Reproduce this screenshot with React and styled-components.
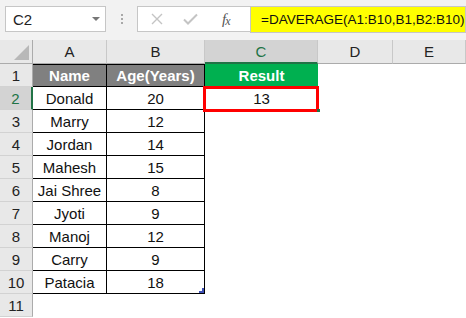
import React from "react";
import styled, { createGlobalStyle, css } from "styled-components";

const GlobalStyle = createGlobalStyle`
  html, body { margin: 0; padding: 0; background: #fff; overflow: hidden; }
  body { font-family: "Liberation Sans", Arial, sans-serif; }
`;

const COLS = ["A", "B", "C", "D", "E"];

const ROWS = [
  ["Donald", 20],
  ["Marry", 12],
  ["Jordan", 14],
  ["Mahesh", 15],
  ["Jai Shree", 8],
  ["Jyoti", 9],
  ["Manoj", 12],
  ["Carry", 9],
  ["Patacia", 18],
];

const Window = styled.div`
  width: 466px;
  height: 318px;
  display: flex;
  flex-direction: column;
  background: #fff;
  overflow: hidden;
`;

const FormulaBar = styled.div`
  height: 40px;
  box-sizing: border-box;
  padding: 6px 0 0 5px;
  background: #f2f2f2;
  display: flex;
  align-items: flex-start;
`;

const NameBox = styled.div`
  width: 101px;
  height: 26px;
  box-sizing: border-box;
  border: 1px solid #c6c6c6;
  background: #fff;
  display: flex;
  align-items: center;
  justify-content: space-between;
  padding: 0 5px 0 7px;
  font-size: 15px;
  color: #222;
`;

const Caret = styled.span`
  width: 0;
  height: 0;
  border-left: 4px solid transparent;
  border-right: 4px solid transparent;
  border-top: 4px solid #777;
`;

const Grip = styled.div`
  width: 31px;
  height: 26px;
  display: flex;
  flex-direction: column;
  align-items: center;
  justify-content: center;
  gap: 2px;

  span {
    width: 2px;
    height: 2px;
    background: #a8a8a8;
  }
`;

const ButtonBox = styled.div`
  width: 113px;
  height: 26px;
  box-sizing: border-box;
  border: 1px solid #c6c6c6;
  border-right: none;
  background: #fff;
  display: flex;
  align-items: center;
  padding-left: 13px;
  gap: 20px;
`;

const Fx = styled.span`
  font-family: "Liberation Serif", "Times New Roman", serif;
  font-style: italic;
  font-size: 15px;
  color: #555;
  margin-left: 4px;
  letter-spacing: -1px;

  sub {
    font-size: 12px;
    vertical-align: baseline;
    position: relative;
    top: 1px;
  }
`;

const FormulaInput = styled.div`
  flex: 1;
  height: 27px;
  box-sizing: border-box;
  border: 1px solid #c6c6c6;
  background: #ffff00;
  display: flex;
  align-items: center;
  padding-left: 10px;
  font-size: 13.5px;
  color: #111;
  white-space: nowrap;
`;

const Sheet = styled.div`
  display: grid;
  grid-template-columns: 33px 74px 98px 113px 75px 73px;
  grid-template-rows: 24px repeat(11, 23px);
  font-size: 15px;
`;

const Corner = styled.div`
  background: #e8e8e8;
  box-sizing: border-box;
  border-right: 1px solid #ababab;
  border-bottom: 1px solid #ababab;
  display: flex;
  align-items: flex-end;
  justify-content: flex-end;
  padding: 0 3px 3px 0;

  &::before {
    content: "";
    width: 15px;
    height: 15px;
    background: #b8b8b8;
    clip-path: polygon(100% 0, 100% 100%, 0 100%);
  }
`;

const ColHead = styled.div`
  box-sizing: border-box;
  background: #e8e8e8;
  border-right: 1px solid #c8c8c8;
  border-bottom: 1px solid #ababab;
  display: flex;
  align-items: center;
  justify-content: center;
  color: #222;
  ${(p) =>
    p.$active &&
    css`
      background: #d3d3d3;
      color: #217346;
      border-bottom: 2px solid #217346;
    `}
`;

const RowHead = styled.div`
  box-sizing: border-box;
  background: #e8e8e8;
  border-right: 1px solid #ababab;
  border-bottom: 1px solid #d2d2d2;
  display: flex;
  align-items: center;
  justify-content: center;
  color: #222;
  ${(p) =>
    p.$active &&
    css`
      background: #d3d3d3;
      color: #217346;
      border-right: 2px solid #217346;
    `}
`;

const Cell = styled.div`
  box-sizing: border-box;
  position: relative;
  display: flex;
  align-items: center;
  justify-content: center;
  color: #111;
  white-space: nowrap;
  ${(p) =>
    p.$table &&
    css`
      border-right: 1px solid #000;
      border-bottom: 1px solid #000;
    `}
  ${(p) =>
    p.$head &&
    css`
      background: #808080;
      color: #fff;
      font-weight: bold;
      border-top: 1px solid #000;
    `}
  ${(p) =>
    p.$result &&
    css`
      background: #00b050;
      color: #fff;
      font-weight: bold;
    `}
  ${(p) =>
    p.$selected &&
    css`
      &::after {
        content: "";
        position: absolute;
        top: -1px;
        left: -2px;
        right: -1px;
        bottom: -2px;
        border: 3px solid #ff0000;
        z-index: 2;
      }
      &::before {
        content: "";
        position: absolute;
        right: -2px;
        bottom: -2px;
        width: 3px;
        height: 3px;
        background: #217346;
        z-index: 3;
      }
    `}
  ${(p) =>
    p.$handle &&
    css`
      &::after {
        content: "";
        position: absolute;
        right: 0;
        bottom: 0;
        width: 5px;
        height: 5px;
        background: #3f51b5;
        clip-path: polygon(100% 0, 100% 100%, 0 100%, 0 60%, 60% 60%, 60% 0);
      }
    `}
`;

const Cross = () => (
  <svg width="12" height="12" viewBox="0 0 12 12">
    <path d="M1 1L11 11M11 1L1 11" stroke="#c4c4c4" strokeWidth="1.4" />
  </svg>
);

const Check = () => (
  <svg width="15" height="12" viewBox="0 0 15 12">
    <path d="M1 6.5L5 10.5L14 1.5" stroke="#c4c4c4" strokeWidth="2" fill="none" />
  </svg>
);

export default function App() {
  return (
    <Window>
      <GlobalStyle />
      <FormulaBar>
        <NameBox>
          C2
          <Caret />
        </NameBox>
        <Grip>
          <span />
          <span />
          <span />
        </Grip>
        <ButtonBox>
          <Cross />
          <Check />
          <Fx>
            f<sub>x</sub>
          </Fx>
        </ButtonBox>
        <FormulaInput>=DAVERAGE(A1:B10,B1,B2:B10)</FormulaInput>
      </FormulaBar>
      <Sheet>
        <Corner />
        {COLS.map((c) => (
          <ColHead key={c} $active={c === "C"}>
            {c}
          </ColHead>
        ))}

        <RowHead>1</RowHead>
        <Cell $table $head>Name</Cell>
        <Cell $table $head>Age(Years)</Cell>
        <Cell $result>Result</Cell>
        <Cell />
        <Cell />

        {ROWS.map(([name, age], i) => {
          const n = i + 2;
          const last = i === ROWS.length - 1;
          return (
            <React.Fragment key={n}>
              <RowHead $active={n === 2}>{n}</RowHead>
              <Cell $table>{name}</Cell>
              <Cell $table $handle={last}>
                {age}
              </Cell>
              <Cell $selected={n === 2}>{n === 2 ? 13 : ""}</Cell>
              <Cell />
              <Cell />
            </React.Fragment>
          );
        })}

        <RowHead>11</RowHead>
        <Cell />
        <Cell />
        <Cell />
        <Cell />
        <Cell />
      </Sheet>
    </Window>
  );
}
